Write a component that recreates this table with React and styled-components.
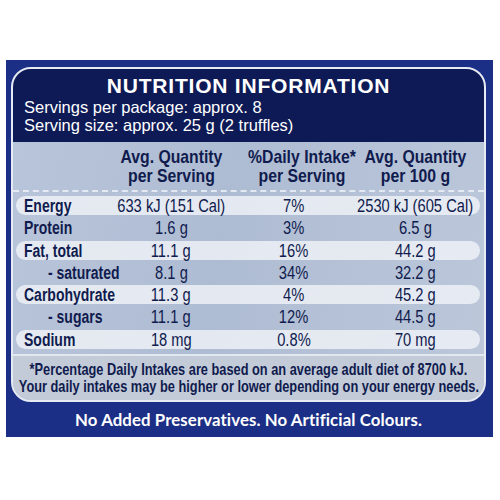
import styled, { createGlobalStyle } from 'styled-components'

const GlobalStyle = createGlobalStyle`
  body {
    margin: 0;
    background: #ffffff;
  }
`

const sans = `"Liberation Sans", Arial, sans-serif`
const navy = '#101b4e'
const columns = '99px 112px 134px 108px'

const Page = styled.div`
  padding: 60px 7px 0 6px;
`

const Panel = styled.div`
  box-sizing: border-box;
  width: 487px;
  height: 377px;
  background: #1c2f86;
  padding: 7px 7px 0 5px;
  display: flex;
  flex-direction: column;
`

const LabelBox = styled.div`
  border: 2px solid #e6eaf2;
  border-radius: 20px;
  overflow: hidden;
  background: linear-gradient(100deg, #b9c5da 0%, #aebcd3 45%, #bcc7da 100%);
`

const TitleBlock = styled.div`
  background: #0e1a56;
  padding: 5px 11px 8px;
  color: #ffffff;
  font-family: ${sans};
`

const Title = styled.h1`
  margin: 0;
  font-size: 21px;
  line-height: 24px;
  font-weight: 700;
  letter-spacing: 0.8px;
  text-align: center;
`

const InfoLine = styled.div`
  font-size: 16.5px;
  line-height: 18px;
`

const Table = styled.div`
  padding: 0 4px 0 3px;
  font-family: ${sans};
  color: ${navy};
`

const HeaderRow = styled.div`
  display: grid;
  grid-template-columns: ${columns};
  padding: 5px 0 5px 3px;
  border-bottom: 2px dashed rgba(240, 244, 250, 0.8);
  margin: 0 -4px 0 -3px;
`

const HeadCell = styled.div`
  justify-self: center;
  margin-left: ${p => p.$shift || 0}px;
  font-size: 19px;
  line-height: 19px;
  font-weight: 700;
  text-align: center;
  white-space: nowrap;
  transform: scaleX(0.83);
`

const Rows = styled.div`
  display: grid;
  row-gap: 3.3px;
  padding: 4px 0 5px;
`

const Row = styled.div`
  display: grid;
  grid-template-columns: ${columns};
  height: 19px;
  align-items: center;
  border-radius: 10px;
  background: ${p => (p.$pill ? 'rgba(236, 239, 245, 0.88)' : 'transparent')};
  font-size: 17.5px;
`

const Label = styled.div`
  justify-self: start;
  margin-left: ${p => (p.$sub ? 32 : 8)}px;
  font-weight: 700;
  white-space: nowrap;
  transform: scaleX(0.8);
  transform-origin: left center;
`

const Value = styled.div`
  justify-self: center;
  white-space: nowrap;
  transform: scaleX(0.84);
`

const Footnote = styled.div`
  border-top: 2px solid rgba(240, 244, 250, 0.7);
  margin: 0 -4px 0 -3px;
  padding: 5px 0 5px;
  background: #c3cbd9;
  display: flex;
  flex-direction: column;
  align-items: center;
  font-weight: 700;
  font-size: 16.5px;
  line-height: 17px;
  color: ${navy};
`

const NoteLine = styled.span`
  white-space: nowrap;
  transform: scaleX(0.775);
`

const Claim = styled.div`
  flex: 1;
  display: flex;
  align-items: center;
  justify-content: center;
  color: #ffffff;
  font-family: Lato, "Open Sans", sans-serif;
  font-weight: 700;
  font-size: 16.8px;
  letter-spacing: 0.1px;
`

const rows = [
  { label: 'Energy', serving: '633 kJ (151 Cal)', di: '7%', per100: '2530 kJ (605 Cal)', pill: true },
  { label: 'Protein', serving: '1.6 g', di: '3%', per100: '6.5 g' },
  { label: 'Fat, total', serving: '11.1 g', di: '16%', per100: '44.2 g', pill: true },
  { label: '- saturated', serving: '8.1 g', di: '34%', per100: '32.2 g', sub: true },
  { label: 'Carbohydrate', serving: '11.3 g', di: '4%', per100: '45.2 g', pill: true },
  { label: '- sugars', serving: '11.1 g', di: '12%', per100: '44.5 g', sub: true },
  { label: 'Sodium', serving: '18 mg', di: '0.8%', per100: '70 mg', pill: true },
]

const App = () => {
  return (
    <Page>
      <GlobalStyle />
      <Panel>
        <LabelBox>
          <TitleBlock>
            <Title>NUTRITION INFORMATION</Title>
            <InfoLine>Servings per package: approx. 8</InfoLine>
            <InfoLine>Serving size: approx. 25 g (2 truffles)</InfoLine>
          </TitleBlock>
          <Table>
            <HeaderRow>
              <div />
              <HeadCell>Avg. Quantity<br />per Serving</HeadCell>
              <HeadCell $shift={16}>%Daily Intake*<br />per Serving</HeadCell>
              <HeadCell>Avg. Quantity<br />per 100 g</HeadCell>
            </HeaderRow>
            <Rows>
              {rows.map(r => (
                <Row key={r.label} $pill={r.pill}>
                  <Label $sub={r.sub}>{r.label}</Label>
                  <Value>{r.serving}</Value>
                  <Value>{r.di}</Value>
                  <Value>{r.per100}</Value>
                </Row>
              ))}
            </Rows>
            <Footnote>
              <NoteLine>*Percentage Daily Intakes are based on an average adult diet of 8700 kJ.</NoteLine>
              <NoteLine>Your daily intakes may be higher or lower depending on your energy needs.</NoteLine>
            </Footnote>
          </Table>
        </LabelBox>
        <Claim>No Added Preservatives. No Artificial Colours.</Claim>
      </Panel>
    </Page>
  )
}

export default App
